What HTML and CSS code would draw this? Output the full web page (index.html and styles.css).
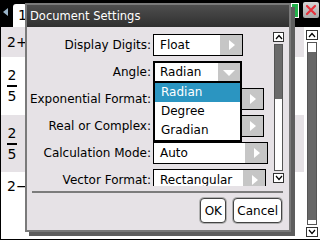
FILE: index.html
```html
<!DOCTYPE html>
<html lang="en">
<head>
    <meta charset="UTF-8">
    <title>Document Settings</title>
    <link rel="stylesheet" href="styles.css">
</head>
<body>
<div class="screen">

    <!-- top bar with page tab -->
    <div class="topbar">
        <svg class="back-arrow" width="5" height="8" viewBox="0 0 5 8"><polygon points="5,0 5,8 0,4" fill="#9ab4c8"/></svg>
        <div class="tab">1</div>
        <div class="spacer"></div>
        <div class="battery"></div>
        <div class="close-btn">
            <svg width="16" height="16" viewBox="0 0 16 16"><path d="M4 4 L12 12 M12 4 L4 12" stroke="#e8303a" stroke-width="2.2" stroke-linecap="round"/></svg>
        </div>
    </div>

    <!-- document behind the dialog -->
    <div class="doc">
        <div class="doc-rows">
            <div class="doc-row shaded row-a">2+</div>
            <div class="doc-row row-b">
                <div class="frac"><span>2</span><span class="den">5</span></div>
            </div>
            <div class="doc-row shaded row-c">
                <div class="frac"><span>2</span><span class="den">5</span></div>
            </div>
            <div class="doc-row row-d">2−</div>
        </div>
        <div class="doc-scroll">
            <div class="scroll-btn">
                <svg width="8" height="6" viewBox="0 0 8 6"><path d="M1 5 L4 1.5 L7 5" stroke="#000" stroke-width="1.2" fill="none"/></svg>
            </div>
            <div class="doc-track"><div class="doc-thumb"></div></div>
            <div class="scroll-btn">
                <svg width="8" height="6" viewBox="0 0 8 6"><path d="M1 1 L4 4.5 L7 1" stroke="#000" stroke-width="1.2" fill="none"/></svg>
            </div>
        </div>
    </div>

    <!-- settings dialog -->
    <div class="dialog">
        <div class="dialog-title">Document Settings</div>
        <div class="dialog-body">
            <div class="settings">
                <div class="settings-list">
                    <div class="setting-row">
                        <span class="label">Display Digits:</span>
                        <div class="combo w-float"><span class="value">Float</span><span class="arrow right"></span></div>
                    </div>
                    <div class="setting-row">
                        <span class="label">Angle:</span>
                        <div class="combo open w-angle"><span class="value">Radian</span><span class="arrow down"></span></div>
                    </div>
                    <!-- values of the next two boxes are hidden by the open list -->
                    <div class="setting-row">
                        <span class="label">Exponential Format:</span>
                        <div class="combo w-wide"><span class="value"></span><span class="arrow right"></span></div>
                    </div>
                    <div class="setting-row">
                        <span class="label">Real or Complex:</span>
                        <div class="combo w-wide"><span class="value"></span><span class="arrow right"></span></div>
                    </div>
                    <div class="setting-row">
                        <span class="label">Calculation Mode:</span>
                        <div class="combo w-auto"><span class="value">Auto</span><span class="arrow right"></span></div>
                    </div>
                    <div class="setting-row">
                        <span class="label">Vector Format:</span>
                        <div class="combo w-rect"><span class="value">Rectangular</span><span class="arrow right"></span></div>
                    </div>
                </div>
                <div class="inner-scroll">
                    <div class="scroll-btn">
                        <svg width="8" height="6" viewBox="0 0 8 6"><path d="M1 5 L4 1.5 L7 5" stroke="#000" stroke-width="1.2" fill="none"/></svg>
                    </div>
                    <div class="inner-track"><div class="inner-thumb"></div></div>
                    <div class="scroll-btn">
                        <svg width="8" height="6" viewBox="0 0 8 6"><path d="M1 1 L4 4.5 L7 1" stroke="#000" stroke-width="1.2" fill="none"/></svg>
                    </div>
                </div>
            </div>

            <div class="separator"></div>

            <div class="dialog-buttons">
                <button class="btn btn-ok">OK</button>
                <button class="btn">Cancel</button>
            </div>

            <!-- open list of the Angle box -->
            <ul class="dropdown">
                <li class="selected">Radian</li>
                <li>Degree</li>
                <li>Gradian</li>
            </ul>
        </div>
    </div>

</div>
</body>
</html>
```

FILE: styles.css
```css
/* page */
body {
    margin: 0;
    background-color: #000;
}

.screen {
    position: relative;
    width: 320px;
    height: 240px;
    overflow: hidden;
    background-color: #000;
    font-family: 'DejaVu Sans', Verdana, sans-serif;
}

/* top bar */
.topbar {
    height: 27px;
    display: flex;
    align-items: flex-start;
}

.back-arrow {
    margin: 8px 0 0 3px;
}

.tab {
    margin: 4px 0 0 5px;
    width: 14px;
    height: 23px;
    padding-left: 5px;
    box-sizing: border-box;
    background-color: #fff;
    border-radius: 3px 3px 0 0;
    font-size: 14px;
    line-height: 22px;
}

.spacer {
    flex: 1;
}

.battery {
    width: 6px;
    height: 13px;
    margin-top: 3px;
    background-color: #22b04a;
    border: 1px solid #fff;
}

.close-btn {
    width: 16px;
    height: 16px;
    margin: 2px 1px 0 4px;
    background: linear-gradient(#d6d6d6, #a8a8a8);
    border-radius: 2px;
}

.close-btn svg {
    display: block;
}

/* document */
.doc {
    height: 213px;
    display: flex;
    background-color: #fff;
    border-left: 1px solid #000;
    border-bottom: 1px solid #000;
    box-sizing: border-box;
}

.doc-rows {
    flex: 1;
    display: flex;
    flex-direction: column;
}

.doc-row {
    display: flex;
    align-items: center;
    padding-left: 6px;
    font-size: 14px;
}

.doc-row.shaded {
    background-color: #e6e2e6;
}

.row-a { height: 30px; }
.row-b { height: 58px; }
.row-c { height: 57px; }

.row-d {
    flex: 1;
    align-items: flex-start;
    padding-top: 6px;
}

.frac {
    display: flex;
    flex-direction: column;
    align-items: center;
    width: 12px;
    margin-left: -1px;
    line-height: 13px;
}

.frac .den {
    border-top: 2px solid #000;
    width: 10px;
    text-align: center;
    padding-top: 3px;
}

.frac span:first-child {
    padding-bottom: 3px;
}

/* scroll bars */
.scroll-btn {
    width: 10px;
    height: 8px;
    background-color: #fff;
    border: 1px solid #333;
    display: flex;
    align-items: center;
    justify-content: center;
}

.doc-scroll {
    width: 12px;
    padding: 3px 2px 2px 2px;
    display: flex;
    flex-direction: column;
    gap: 2px;
    background-color: #fff;
}

.doc-track {
    flex: 1;
    margin: 0 1px;
    background-color: #fff;
    border: 1px solid #555;
    display: flex;
    flex-direction: column;
    padding: 9px 0 4px;
}

.doc-thumb {
    flex: 1;
    background-color: #676767;
}

/* dialog */
.dialog {
    position: absolute;
    left: 25px;
    top: 3px;
    width: 266px;
    height: 229px;
    box-sizing: border-box;
    border: 2px solid #7a7a7a;
    box-shadow: 4px 4px 0 #5e5e5e;
    display: flex;
    flex-direction: column;
}

.dialog-title {
    height: 22px;
    padding-left: 3px;
    background: linear-gradient(#4e4e4e, #303030);
    color: #fff;
    font-size: 11.5px;
    line-height: 22px;
}

.dialog-body {
    position: relative;
    flex: 1;
    background-color: #e6e2e6;
    display: flex;
    flex-direction: column;
}

.settings {
    height: 159px;
    display: flex;
    overflow: hidden;
}

.settings-list {
    width: 246px;
    padding-top: 4px;
}

.setting-row {
    height: 27px;
    display: grid;
    grid-template-columns: 124px auto;
    column-gap: 2px;
    align-items: center;
    font-size: 12px;
}

.label {
    text-align: right;
    white-space: nowrap;
}

.combo {
    height: 22px;
    box-sizing: border-box;
    border: 1px solid #000;
    background-color: #fff;
    display: flex;
    align-items: stretch;
}

.combo.open {
    border: 2px solid #000;
}

.w-float { width: 90px; }
.w-angle { width: 89px; }
.w-wide { width: 111px; }
.w-auto { width: 115px; }
.w-rect { width: 113px; }

.combo .value {
    flex: 1;
    padding-left: 6px;
    line-height: 20px;
    font-size: 12px;
}

.combo.open .value {
    padding-left: 5px;
    line-height: 18px;
}

.arrow {
    width: 22px;
    background-color: #c6c6c6;
    position: relative;
}

.arrow.right::after {
    content: "";
    position: absolute;
    left: 9px;
    top: 5px;
    border-left: 6px solid #fff;
    border-top: 5px solid transparent;
    border-bottom: 5px solid transparent;
}

.arrow.down::after {
    content: "";
    position: absolute;
    left: 5px;
    top: 7px;
    border-top: 6px solid #fff;
    border-left: 6px solid transparent;
    border-right: 6px solid transparent;
}

.inner-scroll {
    width: 11px;
    padding-top: 5px;
    padding-bottom: 3px;
    display: flex;
    flex-direction: column;
    gap: 2px;
}

.inner-scroll .scroll-btn {
    width: 9px;
}

.inner-track {
    flex: 1;
    margin: 0 1px;
    background-color: #fff;
    border: 1px solid #555;
}

.inner-thumb {
    height: 54px;
    background-color: #6a6a6a;
}

.separator {
    height: 2px;
    margin: 5px 6px 0 5px;
    background-color: #7c7c7c;
}

.dialog-buttons {
    display: flex;
    justify-content: flex-end;
    gap: 7px;
    padding: 5px 7px 0 0;
}

.btn {
    height: 25px;
    padding: 0 3px;
    background-color: #fff;
    border: 1px solid #444;
    border-radius: 4px;
    box-shadow: 0 0 0 1px #b0b0b0;
    font-family: 'DejaVu Sans', Verdana, sans-serif;
    font-size: 12px;
    color: #000;
}

.btn-ok {
    min-width: 26px;
}

/* dropdown list */
.dropdown {
    position: absolute;
    left: 126px;
    top: 56px;
    width: 89px;
    margin: 0;
    padding: 0;
    list-style: none;
    background-color: #fff;
    border: 2px solid #000;
    border-top: none;
    box-sizing: border-box;
    font-size: 12px;
}

.dropdown li {
    height: 19px;
    line-height: 19px;
    padding-left: 6px;
}

.dropdown li.selected {
    background-color: #2b95c1;
    color: #fff;
}
```
